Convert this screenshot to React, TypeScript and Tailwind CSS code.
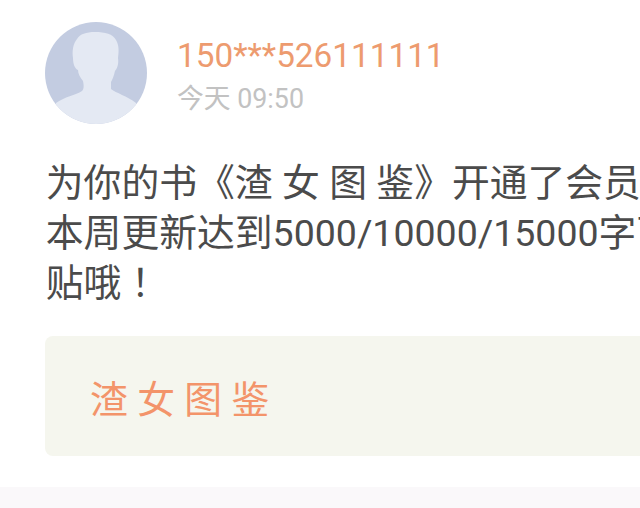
const TITLE = '渣 女 图 鉴'

function Avatar() {
    return (
        <svg viewBox="0 0 102 102" className="size-[102px] shrink-0 rounded-full bg-[#c3cce1]">
            <path
                d="M11 81C19 75 31 73 37 69C39 67 39 64 38 59C35 55 33 52 33 48C30 47 28 42 28 36C27 29 28 22 32 17C35 12 41 10 50 10C60 10 68 12 71 18C74 23 74 29 73 36C74 42 72 47 70 49C69 54 67 58 66 60V67C71 71 82 74 91 81V102H11Z"
                fill="#e4e9f3"
            />
        </svg>
    )
}

export default function App() {
    return (
        <div className="h-[508px] w-[640px] overflow-hidden bg-[#faf8fa] font-['Roboto','Noto_Sans_CJK_SC',sans-serif]">
            <article className="h-[487px] bg-white pt-[22px] pl-[45px]">
                <header className="flex gap-[30px]">
                    <Avatar />
                    <div className="pt-[11px] whitespace-nowrap">
                        <div className="text-[33.3px] leading-[45px] text-[#ed9b6f]">150***526111111</div>
                        <div className="text-[26.8px] leading-[42px] text-[#c2c2c2]">今天 09:50</div>
                    </div>
                </header>

                <div className="mt-[34px] pl-[0.8px] text-[37.8px] leading-[50px] whitespace-nowrap text-[#4b4b4b]">
                    <p>为你的书《{TITLE}》开通了会员</p>
                    <p>
                        本周更新达到<span className="text-[37.5px]">5000/10000/15000</span>字下
                    </p>
                    <p>
                        贴哦<span className="font-['Noto_Sans_CJK_TC',sans-serif] leading-none">！</span>
                    </p>
                </div>

                <div className="mt-[28px] flex h-[120px] items-center rounded-l-lg bg-[#f5f6ee] pt-[7px] pl-[45px]">
                    <span className="text-[37.8px] leading-[50px] whitespace-nowrap text-[#f3946a]">{TITLE}</span>
                </div>
            </article>
        </div>
    )
}
